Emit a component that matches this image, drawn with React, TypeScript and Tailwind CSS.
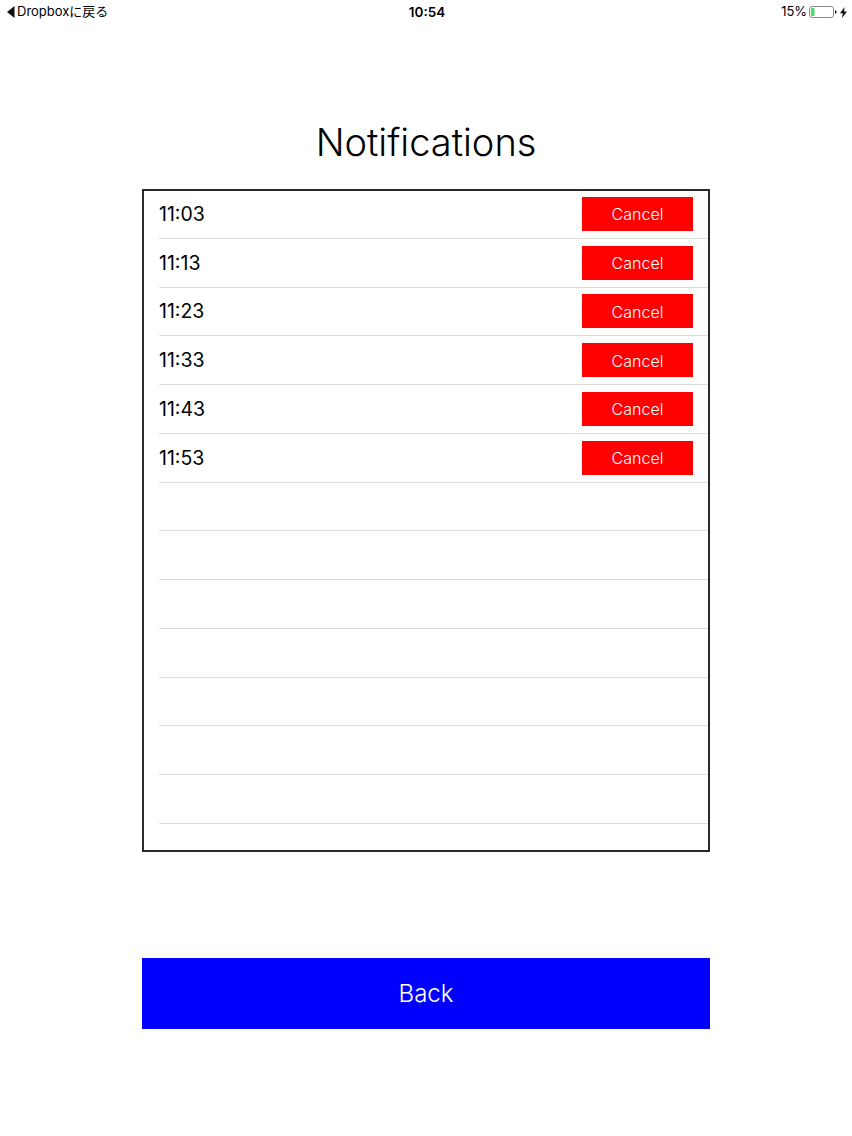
const times = ["11:03", "11:13", "11:23", "11:33", "11:43", "11:53"];
const rows = [...times, "", "", "", "", "", "", ""];

function BatteryIcon() {
  return (
    <svg width="28" height="12" viewBox="0 0 28 12" fill="none">
      <rect x="0.5" y="0.5" width="24" height="11" rx="2.5" stroke="#8a8a8a" strokeWidth="1" />
      <rect x="2" y="2" width="3.5" height="8" rx="0.5" fill="#4cd964" />
      <path d="M26 4.2c1 .2 1.5.9 1.5 1.8s-.5 1.6-1.5 1.8z" fill="#111" />
    </svg>
  );
}

export default function App() {
  return (
    <div className="h-[1136px] w-[852px] overflow-hidden bg-white font-['Inter','Noto_Sans_CJK_JP',sans-serif] text-black">
      <div className="flex h-[24px] items-center justify-between pl-[7px] pr-[5px] text-[13px]">
        <div className="flex w-[200px] items-center gap-[2px]">
          <svg width="8" height="12" viewBox="0 0 8 12">
            <path d="M7.5 0v12L0 6z" fill="#111" />
          </svg>
          <span>Dropboxに戻る</span>
        </div>
        <span className="text-[13.5px] font-semibold">10:54</span>
        <div className="flex w-[200px] items-center justify-end gap-[3px]">
          <span className="-mr-px tracking-[-0.1px]">15%</span>
          <BatteryIcon />
          <svg width="7" height="11" viewBox="0 0 7 11">
            <path d="M4.6 0 0 6.2h2.8L2 11l5-6.6H4z" fill="#111" />
          </svg>
        </div>
      </div>

      <h1 className="mt-[92px] text-center text-[38px] font-light leading-[52px]">Notifications</h1>

      <div className="mx-auto mt-[21px] h-[663px] w-[568px] overflow-hidden border-2 border-[#2a2a2a]">
        <div className="-mt-px">
          {rows.map((time, i) => (
            <div key={i} className="ml-[15px] flex h-[48.75px] items-center justify-between border-b border-[#dcdcdc] pr-[15px]">
              <span className="pt-px text-[19.5px] font-normal">{time}</span>
              {time && (
                <button className="h-[34px] w-[111px] bg-[#ff0000] pt-px text-[16px] font-light text-white">Cancel</button>
              )}
            </div>
          ))}
        </div>
      </div>

      <button className="mx-auto mt-[106px] block h-[71px] w-[568px] bg-[#0000ff] text-[24px] font-light text-white">Back</button>
    </div>
  );
}
